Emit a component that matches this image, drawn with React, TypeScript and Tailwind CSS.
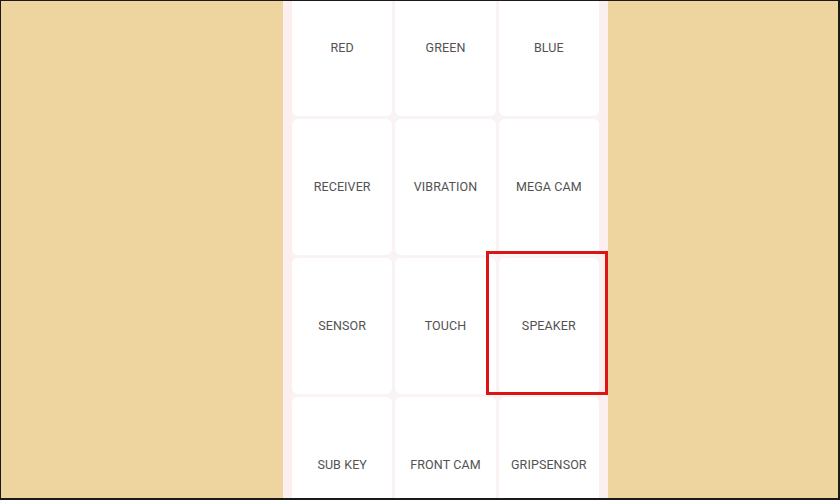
import React from "react";

const rows: string[][] = [
  ["RED", "GREEN", "BLUE"],
  ["RECEIVER", "VIBRATION", "MEGA CAM"],
  ["SENSOR", "TOUCH", "SPEAKER"],
  ["SUB KEY", "FRONT CAM", "GRIPSENSOR"],
];

export default function App() {
  return (
    <div
      className="w-[840px] h-[500px] overflow-hidden bg-[#eed5a0] border-t border-l border-b-2 border-r-2 border-[#1a1a1a] flex"
      style={{ fontFamily: "Roboto, 'Liberation Sans', sans-serif" }}
    >
      <div className="relative ml-[282px] w-[325px] h-full bg-[#fcefef] pl-[9px] pr-[9px]">
        <div className="-mt-[21px] grid grid-cols-3 gap-[3px] bg-[#faf3f3]">
          {rows.flat().map((label) => (
            <div
              key={label}
              className="h-[136px] bg-white rounded-[6px] flex items-center justify-center text-[12.5px] text-[#525252] tracking-[0.1px]"
            >
              {label}
            </div>
          ))}
        </div>
        {/* highlight frame around the speaker test button */}
        <div className="absolute left-[203px] top-[250px] w-[122px] h-[144px] border-[3px] border-[#dd1414]" />
      </div>
    </div>
  );
}
